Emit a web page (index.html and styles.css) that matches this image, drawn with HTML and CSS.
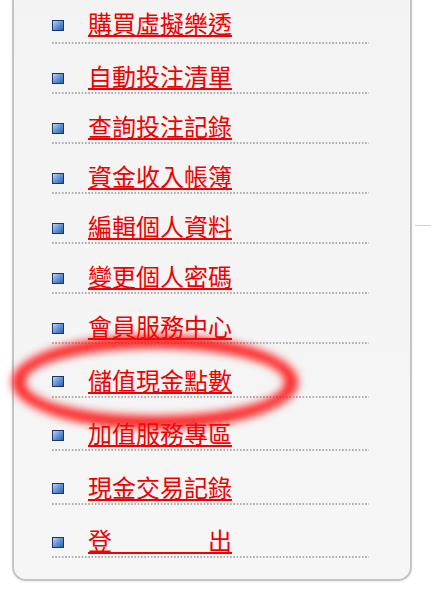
FILE: index.html
```html
<!DOCTYPE html>
<html lang="zh-Hant">
<head>
<meta charset="utf-8">
<title>會員選單</title>
<link rel="stylesheet" href="styles.css">
</head>
<body>
<div class="page">
  <div class="panel">
    <ul class="menu">
      <li class="item first"><span class="bullet"></span><a href="#" class="link">購買虛擬樂透</a></li>
      <li class="item"><span class="bullet"></span><a href="#" class="link">自動投注清單</a></li>
      <li class="item"><span class="bullet"></span><a href="#" class="link">查詢投注記錄</a></li>
      <li class="item"><span class="bullet"></span><a href="#" class="link">資金收入帳簿</a></li>
      <li class="item"><span class="bullet"></span><a href="#" class="link">編輯個人資料</a></li>
      <li class="item"><span class="bullet"></span><a href="#" class="link">變更個人密碼</a></li>
      <li class="item"><span class="bullet"></span><a href="#" class="link">會員服務中心</a></li>
      <li class="item wide"><span class="bullet"></span><a href="#" class="link">儲值現金點數</a></li>
      <li class="item wide"><span class="bullet"></span><a href="#" class="link">加值服務專區</a></li>
      <li class="item wide"><span class="bullet"></span><a href="#" class="link">現金交易記錄</a></li>
      <li class="item wide"><span class="bullet"></span><a href="#" class="link"><span class="spread">登</span>出</a></li>
    </ul>
  </div>
  <div class="side-rule"></div>
  <div class="highlight"></div>
</div>
</body>
</html>
```

FILE: styles.css
```css
html, body {
  margin: 0;
  padding: 0;
  background: #ffffff;
}

.page {
  position: relative;
  display: flex;
  align-items: flex-start;
  width: 431px;
  height: 600px;
  overflow: hidden;
  font-family: "Noto Sans CJK TC", "Noto Sans CJK SC", sans-serif;
}

.panel {
  margin-left: 12px;
  width: 400px;
  box-sizing: border-box;
  border: 2px solid #c4c4c4;
  border-top: 0;
  border-radius: 0 0 14px 14px;
  background: linear-gradient(to bottom, #f3f3f3, #f6f6f6);
  box-shadow: 0 1px 2px rgba(0, 0, 0, 0.08);
  padding: 0 0 21px 0;
}

.menu {
  list-style: none;
  margin: 0;
  padding: 0;
}

.item {
  display: flex;
  align-items: center;
  gap: 24px;
  margin-left: 38px;
  width: 317px;
  height: 50px;
  box-sizing: border-box;
  padding-top: 18px;
  background-image: linear-gradient(to right, #b0b0b0 0, #b0b0b0 1.5px, transparent 1.5px, transparent 3.3px);
  background-size: 3.3px 2px;
  background-repeat: repeat-x;
  background-position: left bottom;
}

.item.first {
  height: 44px;
  padding-top: 6px;
}

.item.wide {
  height: 53.5px;
  padding-top: 22px;
}

.bullet {
  flex: none;
  width: 12px;
  height: 11px;
  box-sizing: border-box;
  border: 1px solid #1d3466;
  background: linear-gradient(135deg, #b9d6f5 0%, #6a9bdc 45%, #2f5fa8 100%);
}

.link {
  color: #f00000;
  font-size: 24px;
  line-height: 1;
  font-weight: 400;
  text-decoration: underline;
  text-decoration-thickness: 2px;
  text-underline-offset: 2px;
  margin-bottom: 4px;
  white-space: pre;
}

.spread {
  letter-spacing: 96px;
}

.side-rule {
  flex: 1;
  margin-left: 3px;
  margin-top: 225px;
  height: 1px;
  background: #cfcfcf;
}

.highlight {
  position: absolute;
  left: 12px;
  top: 335px;
  width: 286px;
  height: 94px;
  box-sizing: border-box;
  border: 13px solid rgba(255, 10, 10, 0.9);
  border-radius: 50%;
  filter: blur(4.5px);
  pointer-events: none;
}
```
